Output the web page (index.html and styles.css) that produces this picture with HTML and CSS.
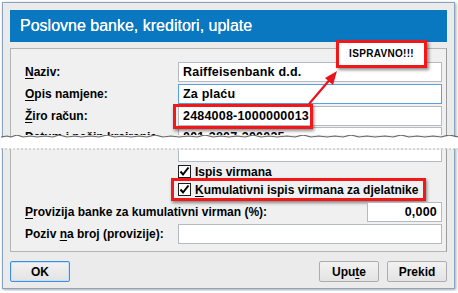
FILE: index.html
```html
<!DOCTYPE html>
<html lang="hr">
<head>
  <meta charset="UTF-8" />
  <title>Poslovne banke, kreditori, uplate</title>
  <link rel="stylesheet" href="styles.css">
</head>
<body>

  <div class="window">
    <div class="titlebar">Poslovne banke, kreditori, uplate</div>

    <div class="panel">
      <div class="row">
        <div class="label"><u>N</u>aziv:</div>
        <div class="input">Raiffeisenbank d.d.</div>
      </div>
      <div class="row">
        <div class="label"><u>O</u>pis namjene:</div>
        <div class="input focused">Za plaću</div>
      </div>
      <div class="row">
        <div class="label"><u>Ž</u>iro račun:</div>
        <div class="input marked-wrap">2484008-1000000013
          <span class="mark-box"></span>
        </div>
      </div>

      <!-- torn part of the screenshot -->
      <div class="row clipped-top">
        <div class="label">Datum i način kreiranja virmana:</div>
        <div class="input">001-2807-300025</div>
      </div>
      <div class="torn">
        <svg width="458" height="15" viewBox="0 0 458 15">
          <polyline points="0,2 6,1 10,2 16,0 22,2 30,1 36,2 44,1 52,2 58,0 66,2 74,1 80,2 90,1 98,2 106,0 114,2 122,1 130,2 138,1 146,2 154,0 162,2 170,1 178,2 188,1 196,2 204,0 212,2 220,1 228,2 236,1 244,2 252,0 260,2 268,1 276,2 286,1 294,2 302,0 310,2 318,1 326,2 334,1 342,2 350,0 358,2 366,1 374,2 384,1 392,2 400,0 408,2 416,1 424,2 432,1 440,2 448,0 458,2" fill="none" stroke="#666" stroke-width="1.2"/>
          <polygon points="0,3 6,2 10,3 16,1 22,3 30,2 36,3 44,2 52,3 58,1 66,3 74,2 80,3 90,2 98,3 106,1 114,3 122,2 130,3 138,2 146,3 154,1 162,3 170,2 178,3 188,2 196,3 204,1 212,3 220,2 228,3 236,2 244,3 252,1 260,3 268,2 276,3 286,2 294,3 302,1 310,3 318,2 326,3 334,2 342,3 350,1 358,3 366,2 374,3 384,2 392,3 400,1 408,3 416,2 424,3 432,2 440,3 448,1 458,3 458,13 450,14 440,13 430,14 420,13 410,14 400,13 390,14 380,13 370,14 360,13 350,14 340,13 330,14 320,13 310,14 300,13 290,14 280,13 270,14 260,13 250,14 240,13 230,14 220,13 210,14 200,13 190,14 180,13 170,14 160,13 150,14 140,13 130,14 120,13 110,14 100,13 90,14 80,13 70,14 60,13 50,14 40,13 30,14 20,13 10,14 0,13" fill="#fff"/>
          <line x1="0" y1="14" x2="458" y2="14" stroke="#b8b8b8" stroke-width="1" stroke-dasharray="2 2"/>
        </svg>
      </div>
      <div class="row clipped-bottom">
        <div class="label"></div>
        <div class="input"></div>
      </div>

      <div class="check-row">
        <span class="check">
          <svg width="13" height="13" viewBox="0 0 13 13"><path d="M2.5 6.5 L5 9.5 L10.5 2.5" fill="none" stroke="#000" stroke-width="2"/></svg>
        </span>
        <span><u>I</u>spis virmana</span>
      </div>
      <div class="check-row">
        <span class="marked">
          <span class="check">
            <svg width="13" height="13" viewBox="0 0 13 13"><path d="M2.5 6.5 L5 9.5 L10.5 2.5" fill="none" stroke="#000" stroke-width="2"/></svg>
          </span>
          <span><u>K</u>umulativni ispis virmana za djelatnike</span>
        </span>
      </div>

      <div class="row wide">
        <div class="label"><u>P</u>rovizija banke za kumulativni virman (%):</div>
        <div class="input number">0,000</div>
      </div>
      <div class="row">
        <div class="label">Poziv <u>n</u>a broj (provizije):</div>
        <div class="input"></div>
      </div>
    </div>

    <div class="buttons">
      <button class="btn default">OK</button>
      <div class="spacer"></div>
      <button class="btn">Upu<u>t</u>e</button>
      <button class="btn">Prekid</button>
    </div>

    <div class="callout">ISPRAVNO!!!</div>
    <svg class="arrow" width="40" height="40" viewBox="0 0 40 40">
      <line x1="6" y1="36" x2="29" y2="9" stroke="#e8141c" stroke-width="2.2"/>
      <polygon points="34,3 22,10 30,17" fill="#e8141c"/>
    </svg>
  </div>

</body>
</html>
```

FILE: styles.css
```css
* {
  box-sizing: border-box;
}

body {
  margin: 0;
  background: #fff;
  font-family: 'Liberation Sans', Arial, sans-serif;
  font-size: 12px;
  font-weight: bold;
  color: #000;
}

.window {
  position: relative;
  margin: 2px;
  width: 453px;
  height: 287px;
  padding: 7px 7px 0 7px;
  background: #ebebeb;
  border: 1px solid #8aa3bf;
  box-shadow: 1px 1px 3px rgba(0, 0, 0, 0.35);
}

.titlebar {
  height: 32px;
  padding-left: 10px;
  background: #0a78c0;
  color: #fff;
  font-size: 16px;
  font-weight: normal;
  line-height: 32px;
  text-shadow: 0 0 0.4px #fff;
}

.panel {
  margin-top: 6px;
  padding: 12px 4px 6px 14px;
  background: #f0f0f0;
  border: 1px solid #b4b4b4;
  border-right-color: #9c9c9c;
}

.row {
  display: grid;
  grid-template-columns: 153px 264px;
  align-items: center;
  height: 22px;
}

.row.wide {
  grid-template-columns: 342px 75px;
  margin-top: 3px;
}

.label u,
.check-row u,
.btn u {
  text-decoration-thickness: 1px;
  text-underline-offset: 2px;
}

.input {
  height: 20px;
  padding-left: 4px;
  line-height: 19px;
  background: #fff;
  border: 1px solid #b5b9c0;
  font-size: 12.5px;
  letter-spacing: 0.2px;
  white-space: nowrap;
  overflow: hidden;
}

.input.focused {
  border-color: #5a9fe0;
}

.input.number {
  text-align: right;
  padding-right: 4px;
}

.marked-wrap {
  position: relative;
  overflow: visible;
}

.mark-box {
  position: absolute;
  left: -6px;
  top: -3px;
  width: 140px;
  height: 25px;
  border: 3px solid #f01818;
  box-shadow: 1px 2px 3px rgba(0, 0, 0, 0.45);
}

.clipped-top {
  height: 8px;
  overflow: hidden;
  align-items: start;
}

.clipped-top .label {
  padding-top: 3px;
}

.clipped-top .input {
  border-bottom: none;
}

.torn {
  height: 15px;
  margin: 0 -13px 0 -24px;
  position: relative;
  z-index: 1;
}

.torn svg {
  display: block;
}

.clipped-bottom {
  height: 12px;
  align-items: end;
}

.clipped-bottom .input {
  height: 12px;
  border-top: none;
}

.check-row {
  display: flex;
  align-items: center;
  padding-left: 153px;
  height: 17px;
  margin-top: 1px;
}

.check-row > span {
  display: flex;
  align-items: center;
}

.check {
  width: 13px;
  height: 13px;
  margin-right: 4px;
  background: #fff;
  border: 1px solid #1e1e1e;
}

.check svg {
  display: block;
  margin: -1px;
}

.marked {
  margin-left: -7px;
  padding: 2px 5px 2px 4px;
  border: 3px solid #f01818;
  box-shadow: 1px 2px 3px rgba(0, 0, 0, 0.45);
  height: 23px;
}

.buttons {
  display: flex;
  gap: 8px;
  margin-top: 9px;
}

.spacer {
  flex: 1;
}

.btn {
  width: 60px;
  height: 21px;
  padding: 0;
  font-family: inherit;
  font-size: 12px;
  font-weight: bold;
  background: linear-gradient(#f2f2f2, #e3e3e3);
  border: 1px solid #adadad;
  border-radius: 2px;
}

.btn.default {
  border-color: #3d8ee0;
  box-shadow: inset 0 0 0 1px #c4e0fb;
}

.callout {
  position: absolute;
  left: 333px;
  top: 37px;
  width: 91px;
  height: 28px;
  background: #fff;
  border: 3px solid #f01818;
  box-shadow: 2px 2px 3px rgba(0, 0, 0, 0.45);
  font-size: 10px;
  line-height: 22px;
  text-align: center;
  letter-spacing: 0.3px;
}

.arrow {
  position: absolute;
  left: 300px;
  top: 65px;
}
```
